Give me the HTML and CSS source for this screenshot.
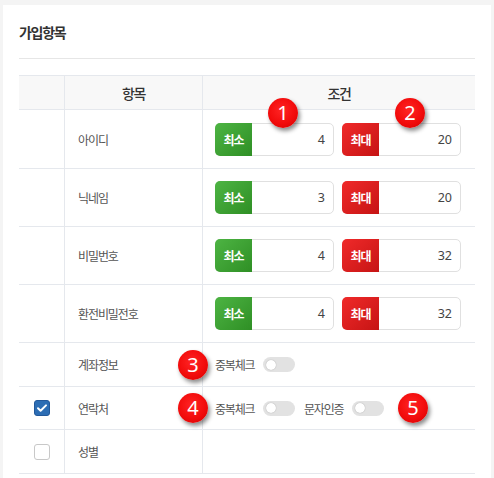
FILE: index.html
```html
<!DOCTYPE html>
<html lang="ko">
<head>
<meta charset="utf-8">
<title>가입항목</title>
<link rel="stylesheet" href="styles.css">
</head>
<body>
<div class="card">
  <div class="title">가입항목</div>
  <div class="table">
    <div class="row head">
      <div class="c c-check"></div>
      <div class="c c-name">항목</div>
      <div class="c c-cond">조건</div>
    </div>

    <div class="row r-first">
      <div class="c c-check"></div>
      <div class="c c-name">아이디</div>
      <div class="c c-cond">
        <div class="range">
          <div class="field"><span class="tag tag-min">최소</span><span class="val">4</span><span class="badge b-top">1</span></div>
          <div class="field"><span class="tag tag-max">최대</span><span class="val">20</span><span class="badge b-top">2</span></div>
        </div>
      </div>
    </div>

    <div class="row r-range">
      <div class="c c-check"></div>
      <div class="c c-name">닉네임</div>
      <div class="c c-cond">
        <div class="range">
          <div class="field"><span class="tag tag-min">최소</span><span class="val">3</span></div>
          <div class="field"><span class="tag tag-max">최대</span><span class="val">20</span></div>
        </div>
      </div>
    </div>

    <div class="row r-range">
      <div class="c c-check"></div>
      <div class="c c-name">비밀번호</div>
      <div class="c c-cond">
        <div class="range">
          <div class="field"><span class="tag tag-min">최소</span><span class="val">4</span></div>
          <div class="field"><span class="tag tag-max">최대</span><span class="val">32</span></div>
        </div>
      </div>
    </div>

    <div class="row r-range">
      <div class="c c-check"></div>
      <div class="c c-name">환전비밀전호</div>
      <div class="c c-cond">
        <div class="range">
          <div class="field"><span class="tag tag-min">최소</span><span class="val">4</span></div>
          <div class="field"><span class="tag tag-max">최대</span><span class="val">32</span></div>
        </div>
      </div>
    </div>

    <div class="row r-small">
      <div class="c c-check"></div>
      <div class="c c-name">계좌정보</div>
      <div class="c c-cond">
        <div class="opts">
          <span class="badge b-left">3</span>
          <span class="opt-label">중복체크</span><span class="toggle"></span>
        </div>
      </div>
    </div>

    <div class="row r-mid">
      <div class="c c-check"><span class="cb checked"><svg viewBox="0 0 16 16" width="16" height="16"><path d="M4 8.2l2.6 2.5L12 5.4" fill="none" stroke="#fff" stroke-width="2" stroke-linecap="round" stroke-linejoin="round"/></svg></span></div>
      <div class="c c-name">연락처</div>
      <div class="c c-cond">
        <div class="opts">
          <span class="badge b-left">4</span>
          <span class="opt-label">중복체크</span><span class="toggle"></span>
          <span class="opt-label">문자인증</span><span class="toggle"></span>
          <span class="badge b-right">5</span>
        </div>
      </div>
    </div>

    <div class="row r-small">
      <div class="c c-check"><span class="cb"></span></div>
      <div class="c c-name">성별</div>
      <div class="c c-cond"></div>
    </div>
  </div>
</div>
</body>
</html>
```

FILE: styles.css
```css
* { box-sizing: border-box; }

html, body {
  margin: 0;
  padding: 0;
  background: #f4f4f4;
  font-family: "Noto Sans CJK KR", "Noto Sans", sans-serif;
  color: #444;
}

.card {
  margin: 5px 3px 0 3px;
  background: #fff;
  padding: 0 16px 20px 16px;
  min-height: 480px;
}

.title {
  padding: 17px 0 16px;
  line-height: 20px;
  font-size: 14px;
  font-weight: 700;
  letter-spacing: -1.3px;
  color: #333;
  border-bottom: 1px solid #e6e6e6;
}

.table {
  margin-top: 16px;
}

.row {
  display: grid;
  grid-template-columns: 45px 138px 1fr;
  border-bottom: 1px solid #e5e8ed;
}

.row.head {
  height: 35px;
  border-top: 1px solid #e5e8ed;
  background: #f8f8f8;
}

.r-first { height: 59px; }
.r-range { height: 58px; }
.r-small { height: 44px; }
.r-mid { height: 43px; }

.c {
  display: flex;
  align-items: center;
  min-width: 0;
}

.c-check { justify-content: center; }

.c-name {
  border-left: 1px solid #e5e8ed;
  padding-left: 13px;
  font-size: 12px;
  letter-spacing: -1.1px;
  color: #555;
}

.c-cond {
  border-left: 1px solid #e5e8ed;
  padding-left: 12px;
}

.head .c-name,
.head .c-cond {
  justify-content: center;
  padding-left: 0;
  font-size: 14px;
  font-weight: 500;
  letter-spacing: -1.3px;
  color: #333;
}

.range {
  display: flex;
  gap: 8px;
}

.field {
  position: relative;
  display: flex;
  width: 119px;
  height: 33px;
  border: 1px solid #e0e0e0;
  border-radius: 5px;
  background: #fff;
}

.tag {
  width: 37px;
  margin: -1px 0 -1px -1px;
  border-radius: 5px 0 0 5px;
  display: flex;
  align-items: center;
  justify-content: center;
  color: #fff;
  font-size: 12px;
  font-weight: 700;
  letter-spacing: -1px;
}

.tag-min { background: linear-gradient(135deg, #4db443 0%, #2f8f25 100%); }
.tag-max { background: linear-gradient(135deg, #f02a2a 0%, #c61414 100%); }

.val {
  flex: 1;
  display: flex;
  align-items: center;
  justify-content: flex-end;
  padding-right: 8px;
  font-family: "Noto Sans", sans-serif;
  font-size: 12.5px;
  color: #444;
}

.badge {
  position: absolute;
  width: 30px;
  height: 30px;
  border-radius: 50%;
  background: radial-gradient(circle at 45% 40%, #ff2424 0%, #f20c0c 55%, #d10000 100%);
  box-shadow: 2px 3px 4px rgba(0, 0, 0, 0.45);
  color: #fff;
  font-family: "Noto Sans", sans-serif;
  font-size: 20px;
  line-height: 30px;
  text-align: center;
  z-index: 2;
}

.b-top { left: 52px; top: -26px; }

.opts {
  position: relative;
  display: flex;
  align-items: center;
}

.b-left { left: -37px; top: 50%; margin-top: -15px; }
.b-right { right: -35px; top: 50%; margin-top: -15px; }

.opt-label {
  font-size: 12px;
  letter-spacing: -1.2px;
  color: #555;
  width: 40px;
  margin-right: 8px;
  white-space: nowrap;
}

.toggle {
  position: relative;
  width: 32px;
  height: 15px;
  border-radius: 8px;
  background: #e2e2e2;
  margin-right: 9px;
}

.toggle:last-of-type { margin-right: 0; }

.toggle::after {
  content: "";
  position: absolute;
  left: 3px;
  top: 2.5px;
  width: 10px;
  height: 10px;
  border-radius: 50%;
  background: #fff;
  box-shadow: 0 0 1px rgba(0, 0, 0, 0.35);
}

.cb {
  display: inline-flex;
  width: 16px;
  height: 16px;
  border-radius: 3px;
  border: 1px solid #c8c8c8;
  background: #fff;
}

.cb.checked {
  border-color: #22589a;
  background: #2c6db4;
}

.cb svg { margin: -1px; }
```
